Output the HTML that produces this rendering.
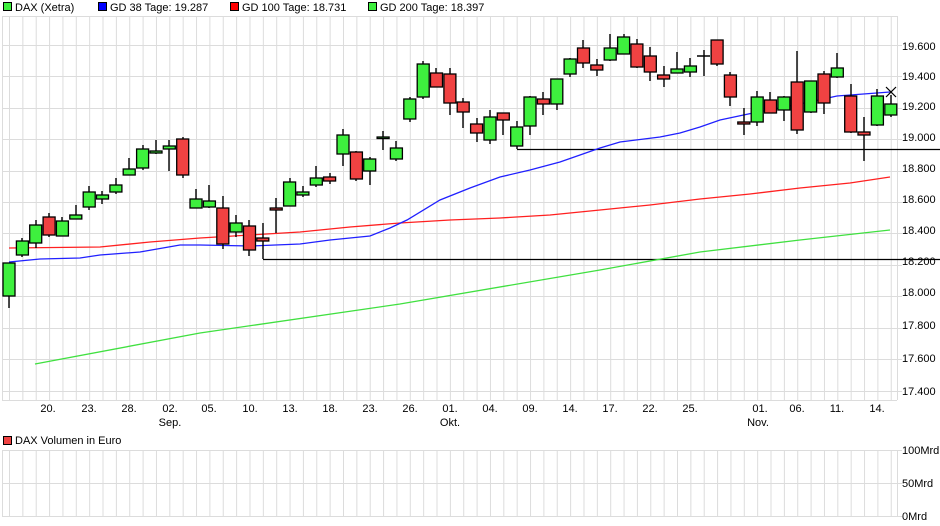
<!DOCTYPE html>
<html><head><meta charset="utf-8"><style>
html,body{margin:0;padding:0;background:#fff;width:940px;height:526px;overflow:hidden}
svg{display:block}
text{font-family:"Liberation Sans",Arial,sans-serif;font-size:11px;fill:#000}
</style></head><body>
<svg width="940" height="526" viewBox="0 0 940 526">
<defs>
<pattern id="vg" x="9" y="0" width="13.36" height="10" patternUnits="userSpaceOnUse"><rect x="0" y="0" width="1" height="10" fill="#dcdcdc"/></pattern>
</defs>
<!-- legend -->
<rect x="3.5" y="2.5" width="8" height="8" fill="#3ef03e" stroke="#000"/><text x="15" y="11">DAX (Xetra)</text>
<rect x="98.5" y="2.5" width="8" height="8" fill="#0000ff" stroke="#000"/><text x="110" y="11">GD 38 Tage: 19.287</text>
<rect x="230.5" y="2.5" width="8" height="8" fill="#ff0000" stroke="#000"/><text x="242" y="11">GD 100 Tage: 18.731</text>
<rect x="368.5" y="2.5" width="8" height="8" fill="#3ef03e" stroke="#000"/><text x="380" y="11">GD 200 Tage: 18.397</text>
<!-- main grid -->
<rect x="2" y="16" width="895" height="384" fill="url(#vg)"/>
<g stroke="#dcdcdc" stroke-width="1" fill="none">
<path d="M2.5 16V400M897.5 16V400M2 16.5H897M2 400.5H897"/>
<path d="M2 45.5H902M2 76.5H902M2 108.5H902M2 139.5H902M2 171.5H902M2 202.5H902M2 233.5H902M2 265.5H902M2 296.5H902M2 328.5H902M2 359.5H902M2 391.5H902"/>
</g>
<!-- y labels -->
<g>
<text x="902" y="50">19.600</text><text x="902" y="80">19.400</text><text x="902" y="110">19.200</text><text x="902" y="141">19.000</text><text x="902" y="172">18.800</text><text x="902" y="203">18.600</text><text x="902" y="234">18.400</text><text x="902" y="265">18.200</text><text x="902" y="296">18.000</text><text x="902" y="329">17.800</text><text x="902" y="362">17.600</text><text x="902" y="395">17.400</text>
</g>
<!-- x labels -->
<g text-anchor="middle">
<text x="48" y="412">20.</text><text x="89" y="412">23.</text><text x="129" y="412">28.</text><text x="170" y="412">02.</text><text x="209" y="412">05.</text><text x="250" y="412">10.</text><text x="290" y="412">13.</text><text x="330" y="412">18.</text><text x="370" y="412">23.</text><text x="410" y="412">26.</text><text x="450" y="412">01.</text><text x="490" y="412">04.</text><text x="530" y="412">09.</text><text x="570" y="412">14.</text><text x="610" y="412">17.</text><text x="650" y="412">22.</text><text x="690" y="412">25.</text><text x="760" y="412">01.</text><text x="797" y="412">06.</text><text x="837" y="412">11.</text><text x="877" y="412">14.</text>
<text x="170" y="426">Sep.</text><text x="450" y="426">Okt.</text><text x="758" y="426">Nov.</text>
</g>
<!-- support lines -->
<path d="M263 259.5H940M517 149.5H940" stroke="#000" stroke-width="1.2"/>
<!-- moving averages -->
<polyline fill="none" stroke="#40e040" stroke-width="1.3" points="35,364 200,333 400,304 600,270 700,252 800,240 890,230"/>
<polyline fill="none" stroke="#ff2020" stroke-width="1.3" points="9,248 100,247 150,242 200,238 250,235 300,232 350,227 400,223 450,220 500,218 550,215 600,210 650,205 700,199 750,194 800,188 850,183 890,177"/>
<polyline fill="none" stroke="#2020ff" stroke-width="1.3" points="9,262 40,259 80,258 100,255 140,252 180,245 200,245 250,246 300,244 330,240 370,236 390,228 407,220 440,200 470,188 500,177 530,170 560,162 580,155 600,148 620,142 660,137 680,133 700,127 720,120 753,113 800,104 837,96 890,92"/>
<!-- candles -->
<g stroke="#000" stroke-width="1.4">
<path d="M9 263V308M22 238V257M36 220V248M49 213V237M62 217V236M76 205V219M89 186V210M102 191V204M116 178V194M129 158V175M143 145V170M156 140V154M169 140V171M183 137V178M196 189V208M209 185V208M223 196V249M236 215V237M249 220V256M263 223V259M276 198V233M290 178V206M303 186V197M316 166V187M330 173V184M343 129V166M356 151V181M370 157V185M383 131V150M396 141V161M410 97V122M423 61V99M436 68V87M450 68V115M463 98V128M477 118V142M490 110V144M503 113V135M517 121V149M530 96V135M543 92V115M557 79V110M570 58V77M583 40V68M597 59V76M610 34V61M624 34V54M637 39V68M650 47V81M664 66V87M677 52V73M690 58V77M704 50V76M717 40V66M730 72V106M744 108V135M757 91V126M770 92V113M784 96V121M797 51V134M811 81V113M824 71V114M837 53V78M851 84V133M864 117V161M877 89V126M891 95V117M697 56H710"/>
</g>
<g stroke="#000" stroke-width="1.3" fill="#3ef03e">
<rect x="3" y="263" width="12" height="33"/><rect x="16.4" y="241" width="12" height="14"/><rect x="29.7" y="225" width="12" height="18"/><rect x="56.4" y="221" width="12" height="15"/><rect x="69.8" y="215" width="12" height="4"/><rect x="83.2" y="192" width="12" height="15"/><rect x="96.5" y="195" width="12" height="4"/><rect x="109.9" y="185" width="12" height="7"/><rect x="123.2" y="169" width="12" height="6"/><rect x="136.6" y="149" width="12" height="19"/><rect x="150" y="151" width="12" height="2"/><rect x="163.3" y="146" width="12" height="3"/><rect x="190" y="199" width="12" height="9"/><rect x="203.4" y="201" width="12" height="6"/><rect x="230.1" y="223" width="12" height="9"/><rect x="283.6" y="182" width="12" height="24"/><rect x="296.9" y="192" width="12" height="3"/><rect x="310.3" y="178" width="12" height="7"/><rect x="337" y="135" width="12" height="19"/><rect x="363.7" y="159" width="12" height="12"/><rect x="377.1" y="137" width="12" height="1.5"/><rect x="390.4" y="148" width="12" height="11"/><rect x="403.8" y="99" width="12" height="20"/><rect x="417.2" y="64" width="12" height="33"/><rect x="484" y="117" width="12" height="23"/><rect x="510.7" y="127" width="12" height="19"/><rect x="524" y="97" width="12" height="29"/><rect x="550.8" y="79" width="12" height="25"/><rect x="564.1" y="59" width="12" height="15"/><rect x="604.2" y="48" width="12" height="12"/><rect x="617.6" y="37" width="12" height="17"/><rect x="671" y="69" width="12" height="4"/><rect x="684.4" y="66" width="12" height="6"/><rect x="751.2" y="97" width="12" height="25"/><rect x="777.9" y="97" width="12" height="13"/><rect x="804.6" y="81" width="12" height="31"/><rect x="831.3" y="68" width="12" height="9"/><rect x="871.4" y="96" width="12" height="29"/><rect x="884.8" y="104" width="12" height="11"/>
</g>
<g stroke="#000" stroke-width="1.3" fill="#f04242">
<rect x="43.1" y="217" width="12" height="18"/><rect x="176.7" y="139" width="12" height="36"/><rect x="216.8" y="208" width="12" height="36"/><rect x="243.5" y="226" width="12" height="24"/><rect x="256.8" y="238" width="12" height="3"/><rect x="270.2" y="208" width="12" height="2"/><rect x="323.6" y="177" width="12" height="4"/><rect x="350.4" y="152" width="12" height="27"/><rect x="430.5" y="73" width="12" height="14"/><rect x="443.9" y="74" width="12" height="29"/><rect x="457.2" y="102" width="12" height="10"/><rect x="470.6" y="124" width="12" height="9"/><rect x="497.3" y="113" width="12" height="7"/><rect x="537.4" y="99" width="12" height="5"/><rect x="577.5" y="48" width="12" height="15"/><rect x="590.8" y="65" width="12" height="5"/><rect x="630.9" y="44" width="12" height="23"/><rect x="644.3" y="56" width="12" height="16"/><rect x="657.6" y="75" width="12" height="4"/><rect x="711.1" y="40" width="12" height="24"/><rect x="724.4" y="75" width="12" height="22"/><rect x="737.8" y="122" width="12" height="2"/><rect x="764.5" y="100" width="12" height="13"/><rect x="791.2" y="82" width="12" height="48"/><rect x="818" y="74" width="12" height="29"/><rect x="844.7" y="96" width="12" height="36"/><rect x="858" y="132" width="12" height="3"/>
</g>
<path d="M886 87L896 97M896 87L886 97" stroke="#000" stroke-width="1.2"/>
<!-- volume panel -->
<rect x="3.5" y="436.5" width="8" height="8" fill="#f04242" stroke="#000"/><text x="15" y="444">DAX Volumen in Euro</text>
<rect x="2" y="450" width="895" height="66" fill="url(#vg)"/>
<g stroke="#dcdcdc" fill="none">
<path d="M2.5 450V516M897.5 450V516M2 450.5H902M2 483.5H902M2 516.5H902"/>
</g>
<text x="902" y="454">100Mrd</text><text x="902" y="487">50Mrd</text><text x="902" y="520">0Mrd</text>
</svg>
</body></html>
